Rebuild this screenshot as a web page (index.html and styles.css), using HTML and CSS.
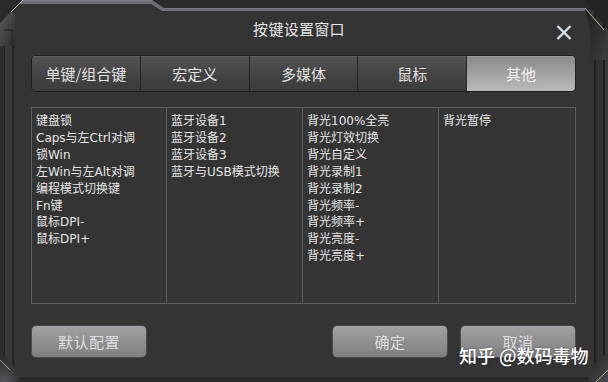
FILE: index.html
```html
<!DOCTYPE html>
<html lang="zh-CN">
<head>
<meta charset="utf-8">
<title>按键设置窗口</title>
<link rel="stylesheet" href="styles.css">
</head>
<body>
<div class="screen">
  <svg class="topbar" width="608" height="12" viewBox="0 0 608 12">
    <rect width="608" height="12" fill="#2a2a2a"/>
    <polygon points="15,3 152,3 163,10 596,10 596,12 15,12" fill="#343434"/>
    <polygon points="22,0 152,0 164,8 585,8 585,11 162,11 151,4 19,4" fill="#6c6c72"/>
    <polygon points="22,0 152,0 153,1 21,1" fill="#808086"/>
    <polygon points="164,8 585,8 585,9 165,9" fill="#7c7c82"/>
  </svg>
  <div class="middle">
    <div class="rail rail-left"></div>
    <main class="window">
      <header class="titlerow">
        <span></span>
        <h1 class="title">按键设置窗口</h1>
        <button class="close" aria-label="关闭">
          <svg width="16" height="15" viewBox="0 0 16 15">
            <path d="M1.5 1 L14.5 14 M14.5 1 L1.5 14" stroke="#d4e0ec" stroke-width="2.4" fill="none"/>
          </svg>
        </button>
      </header>
      <nav class="tabs">
        <div class="tab">单键/组合键</div>
        <div class="tab">宏定义</div>
        <div class="tab">多媒体</div>
        <div class="tab">鼠标</div>
        <div class="tab tab-active">其他</div>
      </nav>
      <section class="lists">
        <ul class="col">
          <li>键盘锁</li>
          <li>Caps与左Ctrl对调</li>
          <li>锁Win</li>
          <li>左Win与左Alt对调</li>
          <li>编程模式切换键</li>
          <li>Fn键</li>
          <li>鼠标DPI-</li>
          <li>鼠标DPI+</li>
        </ul>
        <ul class="col">
          <li>蓝牙设备1</li>
          <li>蓝牙设备2</li>
          <li>蓝牙设备3</li>
          <li>蓝牙与USB模式切换</li>
        </ul>
        <ul class="col">
          <li>背光100%全亮</li>
          <li>背光灯效切换</li>
          <li>背光自定义</li>
          <li>背光录制1</li>
          <li>背光录制2</li>
          <li>背光频率-</li>
          <li>背光频率+</li>
          <li>背光亮度-</li>
          <li>背光亮度+</li>
        </ul>
        <ul class="col col-last">
          <li>背光暂停</li>
        </ul>
      </section>
      <footer class="actions">
        <button class="btn">默认配置</button>
        <div class="btn-group">
          <button class="btn">确定</button>
          <button class="btn">取消</button>
        </div>
      </footer>
    </main>
    <div class="rail rail-right"></div>
  </div>
  <div class="bottombar"></div>

  <svg class="corner corner-tl" width="26" height="46" viewBox="0 0 26 46">
    <defs>
      <linearGradient id="gtl" x1="0" y1="0" x2="1" y2="1">
        <stop offset="0" stop-color="#5a5a5a"/>
        <stop offset="1" stop-color="#2c2c2c"/>
      </linearGradient>
    </defs>
    <polygon points="0,0 23,0 0,23" fill="#2a2a2a"/>
    <polygon points="0,23 12,11 15,13 15,46 0,46" fill="url(#gtl)"/>
    <path d="M23 0 L11 12" stroke="#c9cba6" stroke-width="1"/>
    <path d="M4 30 L12 30 L12 46" stroke="#222" stroke-width="1" fill="none"/>
  </svg>
  <svg class="corner corner-tr" width="26" height="60" viewBox="0 0 26 60">
    <defs>
      <linearGradient id="gtr" x1="0" y1="0" x2="1" y2="1">
        <stop offset="0" stop-color="#1c1c1c"/>
        <stop offset="1" stop-color="#3e3e3e"/>
      </linearGradient>
    </defs>
    <polygon points="3,0 26,0 26,30" fill="#242424"/>
    <polygon points="3,8 24,30 24,60 8,60 8,28" fill="url(#gtr)"/>
    <path d="M3 8 L22 30" stroke="#b8c0a0" stroke-width="1"/>
  </svg>
  <svg class="corner corner-bl" width="22" height="30" viewBox="0 0 22 30">
    <defs>
      <radialGradient id="gbl" cx="0.2" cy="1" r="1">
        <stop offset="0" stop-color="#55565c"/>
        <stop offset="1" stop-color="#2a2a2c"/>
      </radialGradient>
    </defs>
    <path d="M0 4 Q14 6 20 30 L0 30 Z" fill="url(#gbl)"/>
    <path d="M0 8 L10 18" stroke="#9aa08a" stroke-width="1"/>
  </svg>
  <svg class="corner corner-br" width="22" height="30" viewBox="0 0 22 30">
    <defs>
      <linearGradient id="gbr" x1="0" y1="0" x2="1" y2="1">
        <stop offset="0" stop-color="#222"/>
        <stop offset="1" stop-color="#4a4a4e"/>
      </linearGradient>
    </defs>
    <path d="M22 2 Q6 6 2 30 L22 30 Z" fill="url(#gbr)"/>
    <path d="M10 30 L22 18" stroke="#a8b090" stroke-width="1"/>
  </svg>

  <div class="watermark">知乎 @数码毒物</div>
</div>
</body>
</html>
```

FILE: styles.css
```css
* { box-sizing: border-box; }

html, body {
  margin: 0;
  padding: 0;
}

body {
  width: 608px;
  height: 382px;
  overflow: hidden;
  background: #2a2a2a;
  font-family: "Noto Sans CJK SC", sans-serif;
  color: #e2e2e2;
}

.screen {
  position: relative;
  width: 608px;
  height: 382px;
  display: flex;
  flex-direction: column;
}

.topbar {
  display: block;
  flex: 0 0 12px;
}

.middle {
  flex: 1;
  display: flex;
  min-height: 0;
}

.rail-left {
  width: 15px;
  background: linear-gradient(to right,
    #2c2c2c 0, #2c2c2c 4px,
    #222 4px, #222 5px,
    #383838 5px, #383838 12px,
    #242424 12px, #242424 14px,
    #303030 14px);
}

.rail-right {
  width: 14px;
  background: linear-gradient(to right,
    #1e1e1e 0, #1e1e1e 2px,
    #323232 2px, #323232 9px,
    #1c1c1c 9px, #1c1c1c 11px,
    #3a3a3a 11px);
}

.window {
  flex: 1;
  background: #343434;
  padding: 0 18px 0 16px;
  display: flex;
  flex-direction: column;
}

/* title */
.titlerow {
  height: 43px;
  display: grid;
  grid-template-columns: 1fr auto 1fr;
  align-items: start;
}

.title {
  margin: 8px 9px 0 0;
  font-size: 15px;
  line-height: 18px;
  font-weight: normal;
  color: #e6e6e6;
  letter-spacing: 0.3px;
}

.close {
  justify-self: end;
  margin: 13px 4px 0 0;
  padding: 0;
  border: 0;
  background: none;
  width: 16px;
  height: 15px;
}
.close svg { display: block; }

/* tabs */
.tabs {
  height: 37px;
  display: flex;
  border: 1px solid #1f1f1f;
  border-radius: 5px;
  overflow: hidden;
  background: #3c3c3c;
}

.tab {
  flex: 1;
  display: flex;
  align-items: center;
  justify-content: center;
  font-size: 15px;
  color: #e2e2e2;
  background: linear-gradient(#545454, #434343 55%, #3c3c3c);
  border-right: 1px solid #262626;
  box-shadow: inset 0 1px 0 #5e5e5e;
}

.tab:last-child { border-right: 0; }

.tab-active {
  background: linear-gradient(#8a8a8a, #a4a4a4 55%, #bababa);
  color: #f2f2f2;
  box-shadow: inset 0 1px 0 #9c9c9c;
}

/* lists */
.lists {
  margin-top: 15px;
  height: 197px;
  display: grid;
  grid-template-columns: 135px 136px 136px 1fr;
  border: 1px solid #5e5e5e;
}

.col {
  list-style: none;
  margin: 0;
  padding: 5px 0 0 4px;
  border-right: 1px solid #5e5e5e;
  background: linear-gradient(to left, transparent 4px, #3f3f3f 4px, #3f3f3f 5px, transparent 5px);
  font-family: "DejaVu Sans", "Noto Sans CJK SC", sans-serif;
  font-size: 12px;
  line-height: 16.9px;
  color: #e6e6e6;
  white-space: nowrap;
}

.col-last { border-right: 0; }

/* actions */
.actions {
  margin-top: 21px;
  display: flex;
  justify-content: space-between;
}

.btn-group {
  display: flex;
  gap: 12px;
}

.btn {
  width: 116px;
  height: 33px;
  padding: 0;
  border: 1px solid #4a4a4a;
  border-radius: 5px;
  background: linear-gradient(#a2a2a6, #929294 45%, #7f7f81);
  font-family: "Noto Sans CJK SC", sans-serif;
  font-size: 15px;
  color: #dedede;
  letter-spacing: 0.5px;
}

.bottombar {
  flex: 0 0 6px;
  background: linear-gradient(#262626, #2c2c2c);
  border-top: 1px solid #3a3a3a;
}

/* decorative frame corners overlaying the rails */
.corner {
  position: absolute;
  display: block;
}
.corner-tl { left: 0; top: 0; }
.corner-tr { right: 0; top: 0; }
.corner-bl { left: 0; bottom: 0; }
.corner-br { right: 0; bottom: 0; }

/* watermark overlay */
.watermark {
  position: absolute;
  left: 459px;
  top: 345px;
  font-family: "Noto Sans CJK SC", sans-serif;
  font-size: 18px;
  line-height: 20px;
  font-weight: 500;
  color: #ffffff;
  white-space: nowrap;
  text-shadow: 0 0 2px rgba(0,0,0,0.5);
}
```
